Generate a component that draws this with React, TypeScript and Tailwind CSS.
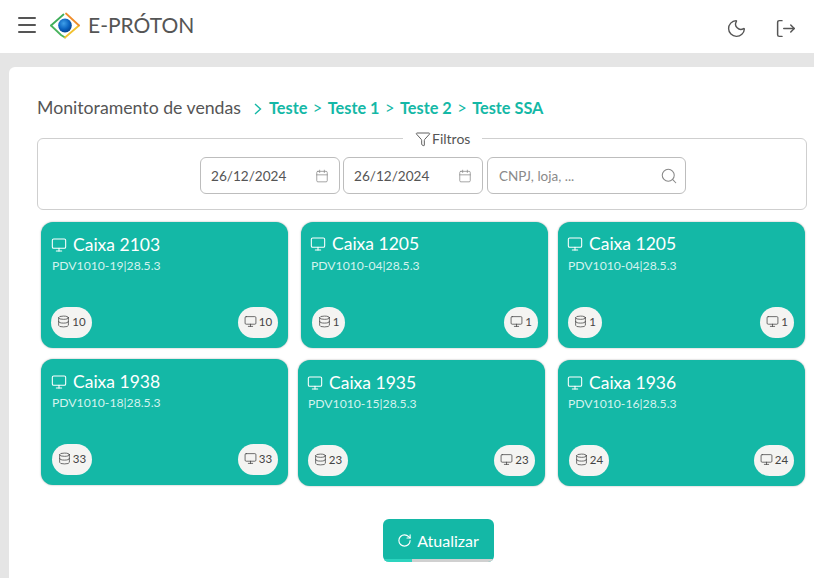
import React from "react";
import { Menu, Moon, Filter, Calendar, Search, Monitor, Database, RotateCw } from "lucide-react";

function Logo() {
  return (
    <svg width="32" height="27" viewBox="0 0 32 27" className="shrink-0">
      <defs>
        <radialGradient id="b" cx="40%" cy="35%" r="70%">
          <stop offset="0%" stopColor="#3f9fe8" />
          <stop offset="60%" stopColor="#0a62c0" />
          <stop offset="100%" stopColor="#063f86" />
        </radialGradient>
      </defs>
      <path d="M14.5 2.5 L2 13.5" stroke="#3fae5a" strokeWidth="1.8" strokeLinecap="round" fill="none" />
      <path d="M2 13.5 L12 23 L16 25.5" stroke="#49b45e" strokeWidth="1.8" strokeLinecap="round" fill="none" />
      <path d="M16 25.5 L30 13.5" stroke="#f2c230" strokeWidth="1.8" strokeLinecap="round" fill="none" />
      <path d="M30 13.5 L17 1.5" stroke="#ef8d2c" strokeWidth="1.8" strokeLinecap="round" fill="none" />
      <ellipse cx="16" cy="13.5" rx="6.8" ry="7" fill="url(#b)" />
    </svg>
  );
}

function DateBox() {
  return (
    <div className="flex h-[37px] w-[140px] items-center justify-between rounded-[6px] border border-[#bdbdbd] pl-[10px] pr-[10px] text-[13.6px] text-[#555]">
      <span className="pt-[2px]">26/12/2024</span>
      <Calendar size={14} strokeWidth={1.3} className="mt-px text-[#888]" />
    </div>
  );
}

function Pill({ icon, n, w }: { icon: React.ReactNode; n: string; w: string }) {
  return (
    <div className={`flex h-[31px] items-center justify-center gap-[2px] rounded-full bg-[#f4f4f2] pb-[2px] text-[11.5px] leading-none text-[#444] ${w}`}>
      {icon}
      <span>{n}</span>
    </div>
  );
}

function Card({ title, sub, n, ml, mt, pl, shift, pillA, pillB, pillPad }: { title: string; sub: string; n: string; ml: string; mt: string; pl: string; shift: string; pillA: string; pillB: string; pillPad: string }) {
  return (
    <div className={`flex h-[126px] w-[247px] shrink-0 flex-col justify-between rounded-[12px] bg-[#14b8a6] pb-[10px] pt-[10px] shadow-[0_0_2px_rgba(0,0,0,0.35)] ${ml} ${mt}`}>
      <div className={`${pl} pr-2`}>
        <div className={`flex items-center gap-[6px] text-[17.5px] leading-[24px] text-white ${shift}`}>
          <Monitor size={16} strokeWidth={1.6} />
          <span>{title}</span>
        </div>
        <div className="mt-[3px] pl-px text-[12.2px] leading-[14px] text-[#d3f3ee]">{sub}</div>
      </div>
      <div className={`flex items-center justify-between ${pillPad}`}>
        <Pill w={pillA} n={n} icon={<Database size={13} strokeWidth={1.4} />} />
        <Pill w={pillB} n={n} icon={<Monitor size={13} strokeWidth={1.4} />} />
      </div>
    </div>
  );
}

export default function App() {
  return (
    <div className="h-[578px] w-[814px] overflow-hidden bg-[#e5e5e5] font-['Lato','Liberation_Sans',sans-serif]">
      <header className="flex h-[53px] items-start justify-between bg-white">
        <div className="flex items-center pl-[15px] pt-[9px]">
          <Menu size={24} strokeWidth={2} className="text-[#555]" />
          <div className="ml-[10px] mt-px"><Logo /></div>
          <span className="ml-[7px] mt-px text-[21px] leading-[30px] text-[#555]">E-PRÓTON</span>
        </div>
        <div className="flex items-center gap-[28px] pr-[18px] pt-[18px]">
          <Moon size={21} strokeWidth={1.6} className="text-[#555]" />
          <svg width="21" height="21" viewBox="0 0 24 24" fill="none" stroke="#555" strokeWidth="1.7" strokeLinecap="round" strokeLinejoin="round">
            <path d="M8 3H5a2 2 0 0 0-2 2v14a2 2 0 0 0 2 2h3" />
            <path d="M10 12h12" />
            <path d="M18 8l4 4-4 4" />
          </svg>
        </div>
      </header>
      <main className="ml-[9px] mt-[14px] h-[511px] rounded-tl-[6px] bg-white pl-[28px] pt-[29px]">
        <div className="flex h-[24px] items-center">
          <span className="text-[17.7px] text-[#555]">Monitoramento de vendas</span>
          <svg width="8" height="12" viewBox="0 0 8 12" fill="none" stroke="#14b8a6" strokeWidth="1.4" className="ml-[13px] mt-px">
            <path d="M1 1 L6.5 6 L1 11" />
          </svg>
          <span className="ml-[7px] mt-px flex gap-[5.5px] text-[16.3px] font-bold text-[#14b8a6]">
            <span>Teste</span><span className="font-normal">&gt;</span>
            <span>Teste 1</span><span className="font-normal">&gt;</span>
            <span>Teste 2</span><span className="font-normal">&gt;</span>
            <span>Teste SSA</span>
          </span>
        </div>
        <fieldset className="mt-[9px] h-[81px] w-[770px] rounded-[6px] border border-[#cfcfcf]">
          <legend className="ml-[365px] flex items-center px-[12px] text-[14px] leading-[18px] text-[#555]">
            <Filter size={16} strokeWidth={1.4} className="mr-px" />
            <span className="pt-px">Filtros</span>
          </legend>
          <div className="mt-[9px] flex gap-[3px] pl-[162px]">
            <DateBox />
            <DateBox />
            <div className="ml-px flex h-[37px] w-[199px] items-center justify-between rounded-[6px] border border-[#bdbdbd] pl-[11px] pr-[7px] text-[13.5px] text-[#8a8a8a]">
              <span className="pt-[2px]">CNPJ, loja, ...</span>
              <Search size={18} strokeWidth={1.4} className="text-[#888]" />
            </div>
          </div>
        </fieldset>
        <div className="mt-[12px] flex">
          <Card title="Caixa 2103" sub="PDV1010-19|28.5.3" n="10" ml="ml-[4px]" mt="mt-0" pl="pl-[10px]" shift="translate-y-px" pillA="w-[41px]" pillB="w-[40px]" pillPad="pl-[10px] pr-[10px]" />
          <Card title="Caixa 1205" sub="PDV1010-04|28.5.3" n="1" ml="ml-[13px]" mt="mt-0" pl="pl-[9px]" shift="" pillA="w-[33px]" pillB="w-[34px]" pillPad="pl-[11px] pr-[10px]" />
          <Card title="Caixa 1205" sub="PDV1010-04|28.5.3" n="1" ml="ml-[10px]" mt="mt-0" pl="pl-[9px]" shift="" pillA="w-[34px]" pillB="w-[34px]" pillPad="pl-[10px] pr-[11px]" />
        </div>
        <div className="mt-[11px] flex items-start">
          <Card title="Caixa 1938" sub="PDV1010-18|28.5.3" n="33" ml="ml-[4px]" mt="mt-0" pl="pl-[10px]" shift="translate-y-px" pillA="w-[40px]" pillB="w-[40px]" pillPad="pl-[11px] pr-[10px]" />
          <Card title="Caixa 1935" sub="PDV1010-15|28.5.3" n="23" ml="ml-[10px]" mt="mt-[1px]" pl="pl-[9px]" shift="translate-y-px" pillA="w-[40px]" pillB="w-[41px]" pillPad="pl-[10px] pr-[10px]" />
          <Card title="Caixa 1936" sub="PDV1010-16|28.5.3" n="24" ml="ml-[13px]" mt="mt-[1px]" pl="pl-[9px]" shift="translate-y-px" pillA="w-[40px]" pillB="w-[40px]" pillPad="pl-[11px] pr-[11px]" />
        </div>
        <div className="ml-[346px] mt-[33px]">
          <button className="relative flex h-[43px] w-[111px] items-center justify-center gap-[5px] overflow-hidden rounded-[6px] bg-[#14b8a6] pr-px text-[16px] text-white">
            <RotateCw size={15} strokeWidth={1.8} />
            Atualizar
            <span className="absolute bottom-0 left-0 h-[3px] w-full bg-[#d0d0d0]" />
            <span className="absolute bottom-0 left-0 h-[3px] w-[29px] bg-[#2dd4bf]" />
          </button>
        </div>
      </main>
    </div>
  );
}
